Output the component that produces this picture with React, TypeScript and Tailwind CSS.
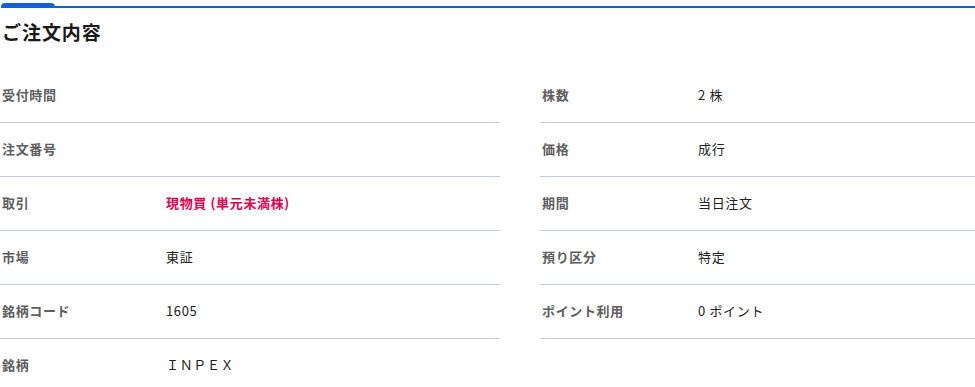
type Row = {
  label: string;
  value: string;
  tone?: 'alert';
  last?: boolean;
};

const leftRows: Row[] = [
  { label: '受付時間', value: '' },
  { label: '注文番号', value: '' },
  { label: '取引', value: '現物買 (単元未満株)', tone: 'alert' },
  { label: '市場', value: '東証' },
  { label: '銘柄コード', value: '1605' },
  { label: '銘柄', value: 'ＩＮＰＥＸ', last: true },
];

const rightRows: Row[] = [
  { label: '株数', value: '2 株' },
  { label: '価格', value: '成行' },
  { label: '期間', value: '当日注文' },
  { label: '預り区分', value: '特定' },
  { label: 'ポイント利用', value: '0 ポイント' },
];

function DetailRow({ row, labelWidth }: { row: Row; labelWidth: string }) {
  return (
    <div
      className={
        'flex h-[54px] items-center pb-[2px] text-[13px] tracking-[0.05em] ' +
        (row.last ? '' : 'border-b border-[#c2cbd9]')
      }
    >
      <div className={labelWidth + ' shrink-0 pl-[2px] font-bold text-[#5e5e5e]'}>
        {row.label}
      </div>
      <div
        className={
          row.tone === 'alert'
            ? 'font-bold text-[#e3004f]'
            : 'text-[#222]'
        }
      >
        {row.value}
      </div>
    </div>
  );
}

export default function App() {
  return (
    <div
      className="w-[975px] h-[387px] overflow-hidden bg-white pt-[3px]"
      style={{ fontFamily: '"Noto Sans CJK JP", "Noto Sans", sans-serif' }}
    >
      {/* tab marker + rule */}
      <div className="flex items-end">
        <div className="ml-[1px] h-[5px] w-[54px] rounded-t-[4px] bg-[#1262d6]" />
        <div className="h-[2px] flex-1 bg-[#1262d6]" />
      </div>

      <h2 className="mt-[11px] mb-[24px] pl-[2px] text-[19px] leading-[26px] font-semibold tracking-[0.05em] text-[#1a1a1a]">
        ご注文内容
      </h2>

      <div className="flex gap-[40px]">
        <div className="w-[500px]">
          {leftRows.map((r) => (
            <DetailRow key={r.label} row={r} labelWidth="w-[166px]" />
          ))}
        </div>
        <div className="flex-1">
          {rightRows.map((r) => (
            <DetailRow key={r.label} row={r} labelWidth="w-[158px]" />
          ))}
        </div>
      </div>
    </div>
  );
}
